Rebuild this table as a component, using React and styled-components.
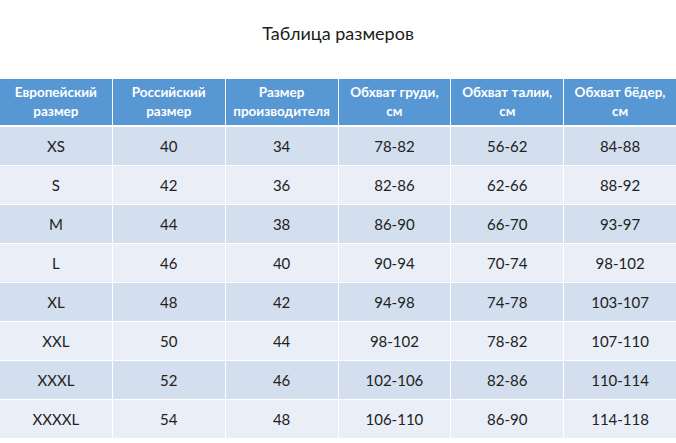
import React from "react";
import styled, { createGlobalStyle } from "styled-components";

const Global = createGlobalStyle`
  html, body { margin: 0; padding: 0; background: #ffffff; }
  body { font-family: Lato, "Noto Sans", sans-serif; }
`;

const Page = styled.div`
  width: 676px;
  height: 443px;
  display: flex;
  flex-direction: column;
  overflow: hidden;
  background: #ffffff;
`;

const Title = styled.h1`
  margin: 0;
  height: 79px;
  padding-top: 21px;
  box-sizing: border-box;
  text-align: center;
  font-family: Lato, "Noto Sans", sans-serif;
  font-weight: 400;
  font-size: 18px;
  line-height: 24px;
  color: #1c1c1c;
`;

const Table = styled.div`
  display: grid;
  grid-template-columns: repeat(6, 1fr);
  column-gap: 1px;
  background: #ffffff;
`;

const HeadCell = styled.div`
  height: 46px;
  margin-bottom: 2px;
  background: #5797d3;
  color: #ffffff;
  font-weight: 700;
  font-size: 13.5px;
  line-height: 19px;
  display: flex;
  align-items: center;
  justify-content: center;
  text-align: center;
  white-space: pre-line;
`;

const Cell = styled.div`
  height: 38px;
  margin-bottom: 1px;
  background: ${(p) => (p.$dark ? "#d3deee" : "#e9eef7")};
  color: #222222;
  font-size: 15px;
  display: flex;
  align-items: center;
  justify-content: center;
`;

const headers = [
  "Европейский\nразмер",
  "Российский\nразмер",
  "Размер\nпроизводителя",
  "Обхват груди,\nсм",
  "Обхват талии,\nсм",
  "Обхват бёдер,\nсм",
];

const rows = [
  ["XS", "40", "34", "78-82", "56-62", "84-88"],
  ["S", "42", "36", "82-86", "62-66", "88-92"],
  ["M", "44", "38", "86-90", "66-70", "93-97"],
  ["L", "46", "40", "90-94", "70-74", "98-102"],
  ["XL", "48", "42", "94-98", "74-78", "103-107"],
  ["XXL", "50", "44", "98-102", "78-82", "107-110"],
  ["XXXL", "52", "46", "102-106", "82-86", "110-114"],
  ["XXXXL", "54", "48", "106-110", "86-90", "114-118"],
];

export default function App() {
  return (
    <Page>
      <Global />
      <Title>Таблица размеров</Title>
      <Table>
        {headers.map((h) => (
          <HeadCell key={h}>{h}</HeadCell>
        ))}
        {rows.map((r, i) =>
          r.map((v, j) => (
            <Cell key={i + "-" + j} $dark={i % 2 === 0}>
              {v}
            </Cell>
          ))
        )}
      </Table>
    </Page>
  );
}
